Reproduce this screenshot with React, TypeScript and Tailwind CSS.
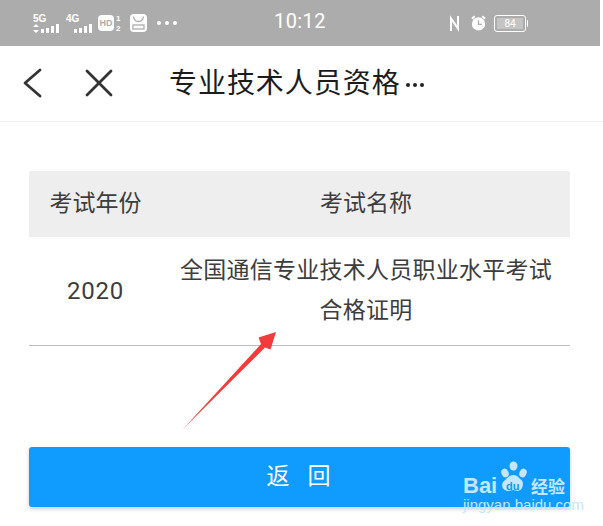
const font = "font-['Roboto','Noto_Sans_CJK_SC',sans-serif]";

const SignalBars = () => (
    <svg width="19" height="9" viewBox="0 0 19 9" fill="#fff">
        <rect x="0" y="5" width="3" height="4" />
        <rect x="5" y="4" width="3" height="5" />
        <rect x="10" y="2" width="3" height="7" />
        <rect x="15" y="0" width="3" height="9" />
    </svg>
);

const StatusBar = () => (
    <div className="h-[46px] w-[600px] bg-[#acacac] flex items-center text-white relative shrink-0">
        <div className="w-[300px] shrink-0 flex items-center pl-[33px] h-full">
            <div className="w-[28px] flex flex-col mt-[1px]">
                <span className="text-[10px] leading-[9px] font-bold font-['Liberation_Sans',sans-serif]">5G</span>
                <div className="flex items-end gap-[2px] h-[10px]">
                    <svg width="6" height="9" viewBox="0 0 6 9" fill="#fff">
                        <path d="M3 0 6 3H0ZM3 9 0 6H6Z" />
                    </svg>
                    <SignalBars />
                </div>
            </div>
            <div className="w-[26px] flex flex-col ml-[5px] mt-[1px]">
                <span className="text-[10px] leading-[9px] font-bold font-['Liberation_Sans',sans-serif]">4G</span>
                <div className="flex justify-end items-end h-[10px] mr-[-1px]">
                    <SignalBars />
                </div>
            </div>
            <div className="ml-[6px] w-[16px] h-[16px] bg-white rounded-[4px] flex items-center justify-center text-[#acacac] text-[9px] font-bold leading-none font-['Liberation_Sans',sans-serif]">HD</div>
            <div className="ml-[2px] w-[7px] flex flex-col gap-[2px] text-[8px] leading-[8px] font-bold font-['Liberation_Sans',sans-serif] mt-[2px]">
                <span>1</span>
                <span>2</span>
            </div>
            <svg className="ml-[7px]" width="17" height="18" viewBox="0 0 17 18">
                <rect width="17" height="18" rx="4" fill="#fff" />
                <path d="M3.500 2.500c.5 3.500 2.500 5 5 5s4.500-1.500 5-5" fill="none" stroke="#acacac" strokeWidth="1.300" />
                <rect x="3" y="11" width="11" height="4" fill="none" stroke="#acacac" strokeWidth="1.300" />
            </svg>
            <div className="ml-[10px] flex gap-[4px]">
                <span className="w-[4px] h-[4px] bg-white rounded-full" />
                <span className="w-[4px] h-[4px] bg-white rounded-full" />
                <span className="w-[4px] h-[4px] bg-white rounded-full" />
            </div>
        </div>
        <div className="absolute left-[274px] top-[9px] text-[20px] leading-[24px] font-['Roboto',sans-serif] tracking-[0.4px]">10:12</div>
        <div className="flex-1 flex items-center pl-[149px]">
            <svg width="11" height="17" viewBox="0 0 11 17" fill="none" stroke="#fff" strokeWidth="2">
                <path d="M2 16V3.500L9 13.500V1" />
            </svg>
            <svg className="ml-[10px]" width="17" height="18" viewBox="0 0 18 18">
                <circle cx="9" cy="10" r="7" fill="#fff" />
                <path d="M2 4.500 5 1.800M16 4.500 13 1.800" stroke="#fff" strokeWidth="2" />
                <path d="M9 6v4.500h3.500" fill="none" stroke="#acacac" strokeWidth="1.400" />
            </svg>
            <div className="ml-[7px] w-[32px] h-[17px] border-[1.5px] border-white rounded-[3px] flex items-center justify-center">
                <div className="w-[26px] h-[11px] bg-[#c4c4c4] text-[10px] leading-[11px] text-center text-white font-['Roboto',sans-serif]">84</div>
            </div>
            <div className="w-[1px] h-[7px] bg-white rounded-r-[1px] ml-[1px]" />
        </div>
    </div>
);

const NavBar = () => (
    <div className="h-[76px] bg-white border-b border-[#f1f1f1] flex items-center shrink-0">
        <svg className="ml-[21px] mt-[-1px]" width="22" height="32" viewBox="0 0 22 32" fill="none" stroke="#333" strokeWidth="2.800" strokeLinecap="round" strokeLinejoin="round">
            <path d="M19 3 4 16 19 29" />
        </svg>
        <svg className="ml-[41px] mt-[-1px]" width="30" height="30" viewBox="0 0 30 30" fill="none" stroke="#333" strokeWidth="2.800" strokeLinecap="round">
            <path d="M3 3 27 27M27 3 3 27" />
        </svg>
        <div className="ml-[55px] text-[28px] leading-[36px] text-[#1c1c1c] tracking-[0.95px] whitespace-nowrap">专业技术人员资格</div>
        <div className="ml-[5px] flex gap-[3px] mt-[2px]">
            <span className="w-[4px] h-[4px] bg-[#222] rounded-full" />
            <span className="w-[4px] h-[4px] bg-[#222] rounded-full" />
            <span className="w-[4px] h-[4px] bg-[#222] rounded-full" />
        </div>
    </div>
);

const Table = () => (
    <div className="w-[541px] ml-[29px] mt-[49px] text-[#3d3d3d] text-[23px]">
        <div className="h-[66px] bg-[#eeeeee] flex items-center rounded-t-[2px]">
            <div className="w-[133px] text-center">考试年份</div>
            <div className="flex-1 text-center">考试名称</div>
        </div>
        <div className="h-[109px] flex items-center border-b border-[#bdbdbd]">
            <div className="w-[133px] text-center text-[24px] font-['Roboto',sans-serif] tracking-[0.7px] mt-[-1px]">2020</div>
            <div className="flex-1 text-center leading-[40px] tracking-[0.25px]">
                全国通信专业技术人员职业水平考试
                <br />
                合格证明
            </div>
        </div>
    </div>
);

const Arrow = () => (
    <svg className="absolute left-[175px] top-[325px]" width="110" height="110" viewBox="175 325 110 110">
        <path d="M183 429 261 344 258.500 337.500 276 332 270.500 349.500 265 347.500Z" fill="#f23b3b" />
    </svg>
);

const Watermark = () => (
    <div className="absolute left-[463px] top-[460px] w-[106px] h-[52px] text-[#c5e6ff] font-['Liberation_Sans',sans-serif]">
        <span className="absolute left-0 top-[15px] text-[22px] leading-[22px] font-bold">Bai</span>
        <svg className="absolute left-[34px] top-0" width="34" height="34" viewBox="0 0 34 34" fill="currentColor">
            <ellipse cx="8" cy="13" rx="3.500" ry="4.500" transform="rotate(-25 8 13)" />
            <ellipse cx="16.500" cy="6" rx="4" ry="4.500" />
            <ellipse cx="26" cy="13" rx="3.500" ry="4.500" transform="rotate(25 26 13)" />
            <path d="M16.500 15c4 0 5 3 8 5 3 3 1 11-4 11-1.500 0-3-1-4.500-1s-3 1-4.500 1C6 31 3 25 7 21c3-2 4.500-6 9.500-6Z" />
        </svg>
        <span className="absolute left-[43px] top-[20px] text-[11px] leading-[12px] font-bold text-[#1097f7]">du</span>
        <span className="absolute left-[68px] top-[16px] text-[17px] leading-[20px] font-['Noto_Sans_CJK_SC',sans-serif] font-bold">经验</span>
        <span className="absolute left-0 top-[38px] text-[15px] leading-[13px] whitespace-nowrap">jingyan.baidu.com</span>
    </div>
);

const App = () => {
    return (
        <div className={`relative w-[603px] h-[526px] overflow-hidden bg-white flex flex-col ${font}`}>
            <StatusBar />
            <NavBar />
            <Table />
            <button className="w-[541px] ml-[29px] mt-[101px] h-[60px] bg-[#0f9bff] rounded-[3px] text-white text-[23px] shadow-[0_2px_4px_rgba(0,0,0,0.2)] flex items-center justify-center gap-[18px] pr-[2px]">
                <span>返</span>
                <span>回</span>
            </button>
            <Arrow />
            <Watermark />
        </div>
    );
};

export default App;
